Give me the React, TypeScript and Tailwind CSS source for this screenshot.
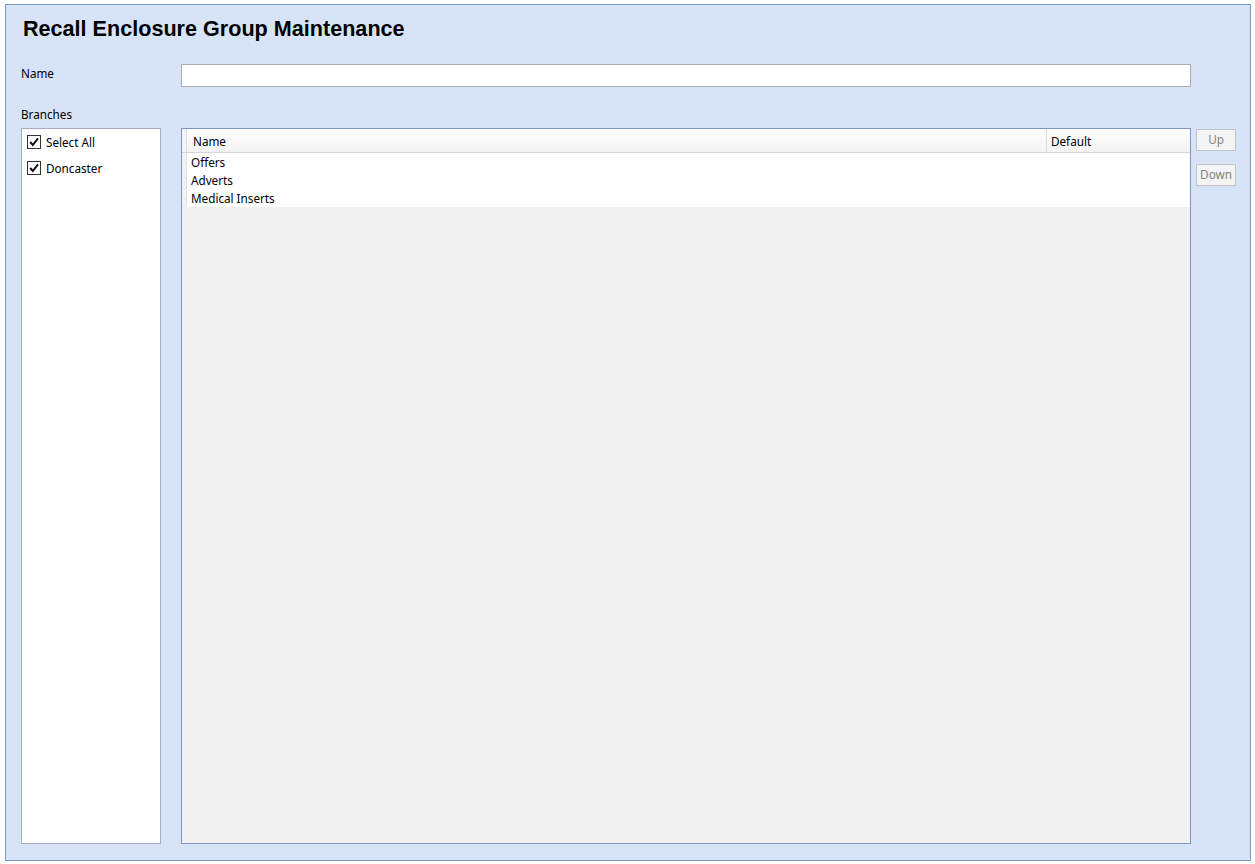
import React from "react";

const Check = () => (
  <span className="w-[14px] h-[14px] border border-[#333] bg-white flex items-center justify-center">
    <svg width="12" height="12" viewBox="0 0 12 12">
      <path d="M2.2 6 L4.8 9 L10 2.4" stroke="#111" strokeWidth="2" fill="none" />
    </svg>
  </span>
);

export default function App() {
  const ui = { fontFamily: '"Noto Sans", "Open Sans", sans-serif' };
  return (
    <div className="w-[1255px] h-[864px] bg-white pl-[5px] pt-[4px] pr-[4px] pb-[3px]" style={ui}>
      <div className="w-full h-full bg-[#d7e4f7] border border-[#7e9bc7] flex flex-col pl-[15px] pr-[14px]">
        <div
          className="mt-[11px] h-[26px] pl-[2px] text-[21.6px] font-bold text-black leading-[26px]"
          style={{ fontFamily: '"Liberation Sans", Arial, sans-serif' }}
        >
          Recall Enclosure Group Maintenance
        </div>
        <div className="mt-[22px] flex items-center h-[23px]">
          <div className="w-[160px] text-[11.7px] text-black leading-none -mt-[3px]">Name</div>
          <div className="w-[1010px] h-[23px] bg-white border border-[#abadb3]" />
        </div>
        <div className="mt-[20px] h-[14px] text-[11.7px] text-black leading-[14px]">Branches</div>
        <div className="mt-[7px] flex">
          <div className="w-[140px] h-[716px] bg-white border border-[#a7adb8] pt-[6px] pl-[5px] flex flex-col gap-[12px]">
            <div className="flex items-center gap-[5px] text-[11.7px] leading-[14px]">
              <Check />
              <span>Select All</span>
            </div>
            <div className="flex items-center gap-[5px] text-[11.7px] leading-[14px]">
              <Check />
              <span>Doncaster</span>
            </div>
          </div>
          <div className="ml-[20px] w-[1010px] h-[716px] bg-[#f0f0f0] border border-[#7f97bf] flex flex-col">
            <div className="flex h-[24px] bg-[linear-gradient(#ffffff,#f3f3f3)] border-b border-[#d5d5d5]">
              <div className="w-[5px] border-r border-[#e0e0e0] bg-[#f5f5f5]" />
              <div className="w-[860px] border-r border-[#dcdcdc] pl-[6px] text-[11.7px] leading-[24px]">Name</div>
              <div className="flex-1 pl-[4px] text-[11.7px] leading-[24px]">Default</div>
            </div>
            {["Offers", "Adverts", "Medical Inserts"].map((r) => (
              <div key={r} className="flex h-[18px] bg-white">
                <div className="w-[5px] bg-[#f2f2f2] border-r border-[#e2e2e2] border-b border-b-[#e6e6e6]" />
                <div className="pl-[4px] text-[11.7px] leading-[18px]">{r}</div>
              </div>
            ))}
          </div>
          <div className="ml-[5px] flex flex-col gap-[13px] pt-[1px]">
            <div className="w-[40px] h-[22px] border border-[#c3c3c3] bg-[#f4f4f4] text-[11.7px] text-[#838383] flex items-center justify-center">Up</div>
            <div className="w-[40px] h-[22px] border border-[#c3c3c3] bg-[#f4f4f4] text-[11.7px] text-[#838383] flex items-center justify-center">Down</div>
          </div>
        </div>
      </div>
    </div>
  );
}
